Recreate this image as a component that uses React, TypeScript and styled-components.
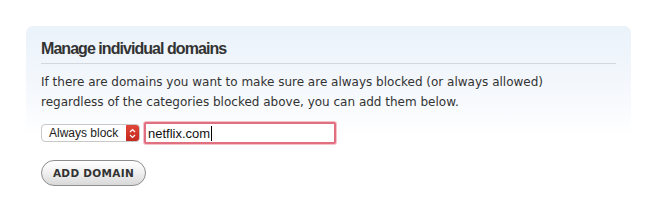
import styled, { createGlobalStyle } from "styled-components";

const GlobalStyle = createGlobalStyle`
  html, body {
    margin: 0;
    padding: 0;
    background: #fff;
  }
`;

const Page = styled.div`
  padding: 26px 17px 0 26px;
  width: 648px;
  height: 206px;
  box-sizing: border-box;
  overflow: hidden;
`;

const Panel = styled.section`
  border-radius: 7px;
  background: linear-gradient(to bottom, #eaf2fa 0px, #f6f9fd 70px, #ffffff 110px);
  padding: 14px 15px 10px 15px;
`;

const Heading = styled.h2`
  margin: 0;
  padding-bottom: 5px;
  border-bottom: 1px solid #d3d8dd;
  font-family: "Liberation Sans", Arial, sans-serif;
  font-weight: bold;
  font-size: 16px;
  letter-spacing: -0.95px;
  color: #333;
  line-height: 18px;
`;

const Intro = styled.p`
  margin: 8px 0 0 0;
  font-family: "DejaVu Sans", Verdana, sans-serif;
  font-size: 12px;
  line-height: 20px;
  color: #333;
`;

const Row = styled.div`
  display: flex;
  align-items: center;
  gap: 4px;
  margin-top: 10px;
`;

const Select = styled.div`
  display: flex;
  align-items: stretch;
  width: 99px;
  height: 18px;
  box-sizing: border-box;
  border: 1px solid #c8c8c8;
  border-radius: 4px;
  background: #fff;
  overflow: hidden;
`;

const SelectLabel = styled.span`
  flex: 1;
  padding-left: 7px;
  font-family: "Liberation Sans", Arial, sans-serif;
  font-size: 12px;
  line-height: 16px;
  color: #222;
`;

const Stepper = styled.span`
  width: 13px;
  background: linear-gradient(to bottom, #e2483a, #c4271d);
  display: flex;
  align-items: center;
  justify-content: center;
`;

const Field = styled.div`
  display: flex;
  align-items: center;
  width: 192px;
  height: 22px;
  box-sizing: border-box;
  border: 2px solid #e07080;
  box-shadow: 0 0 0 1px #f3c2cb;
  border-radius: 2px;
  background: #fff;
  padding-left: 2px;
  font-family: "Liberation Sans", Arial, sans-serif;
  font-size: 13px;
  color: #111;
`;

const Caret = styled.span`
  display: inline-block;
  width: 1px;
  height: 15px;
  background: #000;
  margin-left: 1px;
`;

const AddButton = styled.button`
  display: block;
  margin-top: 16px;
  width: 105px;
  height: 26px;
  border: 1px solid #8e8e8e;
  border-radius: 13px;
  background: linear-gradient(to bottom, #ffffff, #f0f0f0 50%, #d8d8d8);
  font-family: "DejaVu Sans", Verdana, sans-serif;
  font-weight: bold;
  font-size: 10.5px;
  letter-spacing: 0.3px;
  color: #333;
  padding: 0;
`;

function App() {
  return (
    <>
      <GlobalStyle />
      <Page>
        <Panel>
          <Heading>Manage individual domains</Heading>
          <Intro>
            If there are domains you want to make sure are always blocked (or always allowed)
            <br />
            regardless of the categories blocked above, you can add them below.
          </Intro>
          <Row>
            <Select>
              <SelectLabel>Always block</SelectLabel>
              <Stepper>
                <svg width="7" height="11" viewBox="0 0 7 11">
                  <path d="M1 4 L3.5 1.5 L6 4 M1 7 L3.5 9.5 L6 7" stroke="#fff" strokeWidth="1.2" fill="none" />
                </svg>
              </Stepper>
            </Select>
            <Field>
              netflix.com
              <Caret />
            </Field>
          </Row>
          <AddButton>ADD DOMAIN</AddButton>
        </Panel>
      </Page>
    </>
  );
}

export default App;
